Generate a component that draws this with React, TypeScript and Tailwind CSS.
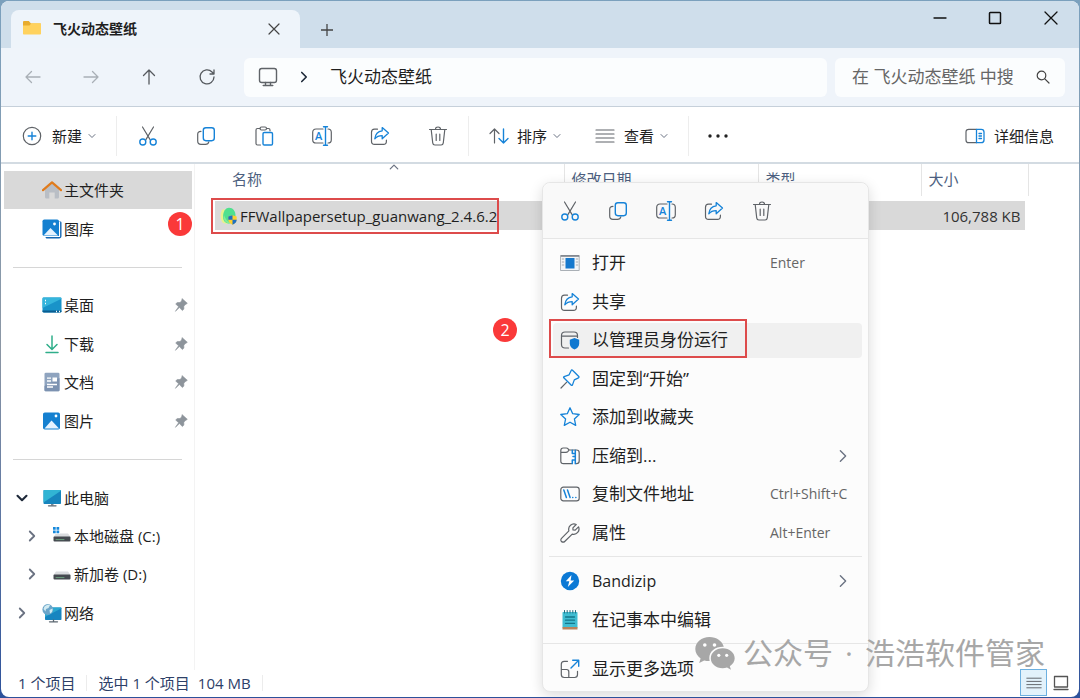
import React from "react";

type IconProps = { className?: string };

const GRAY = "#5f6368";
const BLUE = "#1683d8";

function Svg({ children, className = "size-5", box = "0 0 20 20" }: { children: React.ReactNode; className?: string; box?: string }) {
  return (
    <svg viewBox={box} className={`shrink-0 ${className}`} fill="none" strokeWidth="1.2" strokeLinecap="round" strokeLinejoin="round" aria-hidden="true">
      {children}
    </svg>
  );
}

/* ---------- command icons ---------- */

const CutIcon = ({ className }: IconProps) => (
  <Svg className={className}>
    <path d="M4.5 1l7.6 12.6M15.5 1L7.9 13.6" stroke={GRAY} />
    <circle cx="4.8" cy="16" r="3" stroke={BLUE} strokeWidth="1.4" />
    <circle cx="15.2" cy="16" r="3" stroke={BLUE} strokeWidth="1.4" />
  </Svg>
);

const CopyIcon = ({ className }: IconProps) => (
  <Svg className={className}>
    <path d="M5 5.3C3 5.3 1.7 6.400 1.700 8.300V15c0 2 1.300 3.300 3.300 3.300h4.500c1.900 0 3-1 3.300-2.400" stroke={GRAY} />
    <rect x="7.300" y="1.700" width="11" height="13" rx="2.600" stroke={BLUE} strokeWidth="1.400" />
  </Svg>
);

const PasteIcon = ({ className }: IconProps) => (
  <Svg className={className}>
    <path d="M6 2.500H3.500A1.500 1.500 0 002 4v13.500A1.500 1.500 0 003.500 19H6.500M12.500 2.500H14.500A1.500 1.500 0 0116 4v.8" stroke={GRAY} />
    <rect x="6" y="1" width="6.500" height="3" rx="1.500" stroke={GRAY} />
    <rect x="9" y="6.500" width="9.500" height="12.500" rx="1.300" stroke={BLUE} strokeWidth="1.400" />
  </Svg>
);

const RenameIcon = ({ className }: IconProps) => (
  <Svg className={className}>
    <path d="M11 3H4C2 3 .7 4.300.7 6.300v7.400c0 2 1.300 3.300 3.300 3.300h7M16 3c2.200 0 3.300 1.300 3.300 3.300v7.400c0 2-1.100 3.300-3.300 3.300" stroke={GRAY} />
    <text x="3" y="13.800" fontSize="11" fontWeight="600" fontFamily="Open Sans, sans-serif" fill={BLUE}>A</text>
    <path d="M13.500.8v18.400M11.500.8h4M11.500 19.200h4" stroke={BLUE} strokeWidth="1.400" />
  </Svg>
);

const ShareIcon = ({ className }: IconProps) => (
  <Svg className={className}>
    <path d="M7.500 3.200H4.500C2.500 3.200 1.500 4.300 1.500 6.200v9c0 2 1.100 3.200 3.100 3.200h8.800c2 0 3-1.200 3-3.200v-1" stroke={GRAY} />
    <path d="M12.200 1.600l6.300 5.500-6.300 5.600V9.600c-3.400 0-5.600.9-7.400 3.200.5-4.700 3-7.500 7.400-8z" stroke={BLUE} strokeWidth="1.300" />
  </Svg>
);

const TrashIcon = ({ className }: IconProps) => (
  <Svg className={className}>
    <path d="M1.500 3.500h17M3.200 3.500l1.500 13.300c.2 1.400.9 2.200 2.200 2.200h6.200c1.300 0 2-.8 2.200-2.200l1.500-13.300M7.500 3.200C7.500 1.800 8.500 1 10 1s2.500.8 2.500 2.200M8.200 8v6.500M11.800 8v6.500" stroke={GRAY} />
  </Svg>
);

const PlusCircleIcon = () => (
  <Svg>
    <circle cx="10" cy="10" r="8.700" stroke={GRAY} />
    <path d="M10 6.200v7.600M6.200 10h7.600" stroke={BLUE} strokeWidth="1.400" />
  </Svg>
);

const SortIcon = () => (
  <Svg>
    <path d="M5.500 17V3M1 7.500L5.500 3 10 7.500" stroke={GRAY} />
    <path d="M14.500 3v14M10 12.500l4.500 4.500 4.500-4.500" stroke={BLUE} strokeWidth="1.400" />
  </Svg>
);

const LinesIcon = ({ className }: IconProps) => (
  <Svg className={className}>
    <path d="M1 4h18M1 8h18M1 12h18M1 16h18" stroke={GRAY} />
  </Svg>
);

const DetailsIcon = () => (
  <Svg>
    <path d="M11.500 3.300H3.800C2 3.300 1 4.300 1 6.100v7.800c0 1.800 1 2.800 2.800 2.800h7.700" stroke={GRAY} />
    <path d="M11.500 3.300h4.700c1.800 0 2.800 1 2.800 2.800v7.800c0 1.800-1 2.800-2.800 2.800h-4.700zM14 7.500h2.500M14 10h2.500M14 12.500h2.500" stroke={BLUE} strokeWidth="1.300" />
  </Svg>
);

const Chevron = ({ dir = "down", className = "size-2 text-gray-500" }: { dir?: "down" | "right" | "up"; className?: string }) => (
  <svg viewBox="0 0 8 8" className={`shrink-0 ${className}`} fill="none" stroke="currentColor" strokeWidth="1" strokeLinecap="round" strokeLinejoin="round" aria-hidden="true">
    {dir === "down" && <path d="M1 2.500l3 3 3-3" />}
    {dir === "up" && <path d="M1 5.500l3-3 3 3" />}
    {dir === "right" && <path d="M2.500 1l3 3-3 3" />}
  </svg>
);

/* ---------- navigation icons ---------- */

const ArrowIcon = ({ d, className = "text-[#55595e]" }: { d: string; className?: string }) => (
  <Svg className={`size-5 ${className}`}>
    <path d={d} stroke="currentColor" strokeWidth="1.300" />
  </Svg>
);

const FolderIcon = () => (
  <Svg className="size-[18px]" box="0 0 18 18">
    <path d="M0 4.500V2.200C0 1.500.5 1 1.200 1h4.600L8 3.500h9c.6 0 1 .4 1 1V8H0z" fill="#e8ac2e" />
    <path d="M0 5.500h6.500L8.300 3.300H17c.6 0 1 .4 1 1v9.200c0 .6-.4 1-1 1H1c-.6 0-1-.4-1-1z" fill="#ffd25e" />
  </Svg>
);

const MonitorOutlineIcon = () => (
  <Svg>
    <rect x="1.500" y="1.500" width="17" height="14" rx="2.200" stroke={GRAY} strokeWidth="1.400" />
    <path d="M7.500 15.500v3M12.500 15.500v3M5.200 18.500h9.600" stroke={GRAY} strokeWidth="1.400" />
  </Svg>
);

/* ---------- sidebar icons ---------- */

const HomeIcon = () => (
  <Svg>
    <path d="M3 9.500L10 3.500l7 6V17c0 .8-.5 1.500-1.300 1.500h-3V12.500H7.300v6h-3C3.500 18.500 3 17.800 3 17z" fill="#b9bec5" />
    <path d="M1 10.200L10 2.300l9 7.900" stroke="#e07b1c" strokeWidth="2.200" />
  </Svg>
);

const PictureGlyph = ({ stacked }: { stacked?: boolean }) => (
  <Svg>
    {stacked && <path d="M17 2.500h1.200c.7 0 1.300.5 1.300 1.200V17c0 1.600-1 2.500-2.500 2.500H5c-1 0-1.500-.6-1.500-1.500z" fill="#1467b3" />}
    {stacked && <path d="M3 17.500h14.500V3" stroke="#fff" strokeWidth="1.200" />}
    <rect x={stacked ? 0.5 : 1} y={stacked ? 0.5 : 1.5} width={stacked ? 16.5 : 17} height={stacked ? 16.5 : 17} rx="1.800" fill="#1580d0" />
    <path d={stacked ? "M1.500 16.500l7-7.500 7.500 7.500z" : "M2.500 17.500l7-8 7.500 8z"} fill="#e6f3ff" />
    <circle cx={stacked ? 12.5 : 14} cy="5" r="1.400" fill="#fff" />
  </Svg>
);

const DesktopIcon = () => (
  <Svg>
    <rect x=".5" y="2.500" width="19" height="15" rx="1.300" fill="#1993c9" />
    <path d="M1.800 2.500h16.400c.8 0 1.300.5 1.300 1.300L.5 13V3.800c0-.8.500-1.300 1.300-1.300z" fill="#35b5dc" />
    <path d="M.5 15.500h19v.8c0 .7-.5 1.200-1.300 1.200H1.800c-.8 0-1.300-.5-1.300-1.200z" fill="#0a5d91" />
    <path d="M3 5.500h1M3 8.500h1M14 16.500h1M17 16.500h1" stroke="#fff" strokeLinecap="butt" strokeWidth="1.300" />
  </Svg>
);

const DownloadIcon = () => (
  <Svg>
    <path d="M10 2v13M5 10.500l5 5 5-5M4 18.500h12" stroke="#2fae8a" strokeWidth="1.500" />
  </Svg>
);

const DocumentIcon = () => (
  <Svg>
    <rect x="2.500" y=".8" width="15" height="18.500" rx="1.300" fill="#8fa4bf" />
    <path d="M2.500 14L17.500 6v12c0 .8-.5 1.300-1.300 1.300H3.800c-.8 0-1.300-.5-1.300-1.300z" fill="#7c92b1" />
    <path d="M5 6.200h4M5 9h4M5 12.500h10M5 15h6" stroke="#fff" strokeWidth="1.300" strokeLinecap="butt" />
    <rect x="10.500" y="5.500" width="4.500" height="4" fill="#fff" />
  </Svg>
);

const ComputerIcon = () => (
  <Svg>
    <rect x="1.500" y="2" width="17.500" height="14" rx=".8" fill="#1785bd" />
    <path d="M2.300 2h15.900c.5 0 .8.3.8.8L1.500 14.500V2.800c0-.5.3-.8.8-.8z" fill="#31b4d4" />
    <path d="M9 16h2.500v1.500H9z" fill="#7b8792" />
    <path d="M6.500 17.800h7.500" stroke="#5b6670" strokeWidth="1.300" />
  </Svg>
);

const DiskIcon = ({ system }: { system?: boolean }) => (
  <Svg>
    <path d="M4 7.500h12l2.500 3.500H1.500z" fill="#dadcdf" />
    <rect x="1.500" y="10.500" width="17" height="5" rx="1" fill="#454a50" />
    <path d="M4 13.600h8" stroke="#75b58a" strokeWidth=".8" />
    {system && (
      <>
        <path d="M0 .500h8v7.500H0z" fill="#fff" />
        <path d="M1 1h2.700v2.700H1zM4.500 1h2.700v2.700H4.500zM1 4.500h2.700v2.700H1zM4.500 4.500h2.700v2.700H4.500z" fill="#1689dc" />
      </>
    )}
  </Svg>
);

const NetworkIcon = () => (
  <Svg>
    <rect x="3" y="4.500" width="16.500" height="12.500" rx=".8" fill="#1785c0" />
    <path d="M19.500 5.300L3 14V5.300c0-.5.3-.8.8-.8h14.900c.5 0 .8.3.8.800z" fill="#2ba8d0" />
    <path d="M7.500 18.800h8M11.500 17v1.500" stroke="#5b6670" strokeWidth="1.300" />
    <circle cx="5.800" cy="6.500" r="5.400" fill="#6ba5c9" />
    <path d="M2.500 3.500c2-1.800 4.500-2 5.500-1.200L6.500 5 4 6l-.5 2.500L1.500 6zM7.500 7l3-1.500c.3 2.500-.5 4-2.500 5z" fill="#d2ebf2" />
  </Svg>
);

const PinnedIcon = () => (
  <Svg className="size-[14px]" box="0 0 14 14">
    <path d="M8.300.8l5 4.500-1.700 1.200-.600.200-1.200 1.700.100 2.700-1.500 1.400-3-2.900-4 3.700 3.200-4.600L1.700 6l1.500-1.400 2.800-.100 1.500-1.400z" fill="#8d949b" stroke="#8d949b" strokeWidth=".6" />
  </Svg>
);

const FileIcon = () => (
  <Svg className="size-[18px]" box="0 0 18 18">
    <path d="M3 2C0 5-.500 12 3 16l5 1V4z" fill="#e8f28e" />
    <path d="M9 .8c4 0 6.500 3.500 6.500 7.700S13 16.500 9 16.500 3 13.500 3 9.500 5 .8 9 .8z" fill="#4fe08f" />
    <path d="M4 8c-1.500 3 .5 7 4 8.500l3-1C7 14.500 5.500 12 4 8z" fill="#83eb9a" />
    <path d="M12.500 8.300l4.200 1.300v3c0 2.300-1.600 4-4.200 5.200-2.600-1.200-4.200-2.900-4.200-5.200v-3z" fill="#ffcf2e" />
    <path d="M12.500 8.300v4.500H8.300V9.600zM12.500 12.800h4.200c0 2.200-1.600 3.900-4.200 5z" fill="#1e6fc2" />
  </Svg>
);

/* ---------- menu icons ---------- */

const OpenIcon = () => (
  <Svg>
    <rect x=".8" y="2.500" width="18.400" height="15" fill="#f3f5f7" stroke="#aab0b6" strokeWidth="1" />
    <path d="M.8 3h18.400" stroke="#777d84" strokeWidth="1.500" strokeLinecap="butt" />
    <rect x="5.500" y="5" width="9" height="10.500" fill="#1679cd" />
    <path d="M2.200 6h1.600M2.200 9h1.600M2.200 12h1.600M16.200 6h1.600M16.200 9h1.600M16.200 12h1.600" stroke="#a5abb2" strokeWidth="1" />
  </Svg>
);

const AdminIcon = () => (
  <Svg>
    <path d="M8.500 18H5c-2.300 0-3.500-1.200-3.500-3.500v-9C1.500 3.200 2.700 2 5 2h9c2.300 0 3.500 1.200 3.500 3.500v2M1.500 6.200h16" stroke={GRAY} />
    <path d="M14.500 8l4.700 1.700v4c0 2.600-1.900 4.500-4.700 5.800-2.800-1.300-4.700-3.200-4.700-5.800v-4z" fill="#0f78d0" />
  </Svg>
);

const PinIcon = () => (
  <Svg>
    <path d="M1 19l5.500-5.700" stroke={GRAY} />
    <path d="M12.500 1.200l6.300 6.300c.400.5.300 1-.3 1.300l-4.200 2.100-1.800 5c-.2.600-.7.700-1.200.3L3.800 8.800c-.4-.5-.3-1 .3-1.200l5-1.800 2.100-4.300c.3-.6.900-.7 1.300-.3z" stroke={BLUE} strokeWidth="1.300" />
  </Svg>
);

const StarIcon = () => (
  <Svg>
    <path d="M10 .8l2.700 5.900 6.500.8-4.800 4.400 1.300 6.500L10 15.200l-5.700 3.200 1.300-6.500L.8 7.500l6.500-.8z" stroke={BLUE} strokeWidth="1.300" />
  </Svg>
);

const ZipIcon = () => (
  <Svg>
    <path d="M12 17.700H3.500c-1.700 0-2.700-1-2.700-2.700V4.500c0-1.500.9-2.500 2.400-2.500h3c1 0 1.500.3 2 1l.9 1h7.400c1.700 0 2.700 1 2.700 2.700V15c0 1.700-1 2.700-2.700 2.700M.8 6.400h5c1 0 1.600-.3 2.200-1L9.100 4" stroke={GRAY} />
    <path d="M12.300 4.200v3.300h3M15.300 4.200v13.500M13 10.500h2.300M12.300 17.500v-3.500h3" stroke={BLUE} strokeWidth="1.500" />
  </Svg>
);

const PathIcon = () => (
  <Svg>
    <rect x=".8" y="3.200" width="18.400" height="13.600" rx="2.600" stroke={GRAY} />
    <path d="M3.800 6l2.600 7.600M7.500 6l2.600 7.600M12.700 13.500h.1M15.800 13.500h.1" stroke={BLUE} strokeWidth="1.500" />
  </Svg>
);

const WrenchIcon = () => (
  <Svg>
    <path d="M16.200 1.500a5.300 5.300 0 00-7.300 6.300l-7.400 7.500a2.200 2.200 0 003.200 3.200l7.500-7.400a5.300 5.300 0 006.300-7.300l-3.300 3.300-2.200-.1-.1-2.200z" stroke={GRAY} />
  </Svg>
);

const BandizipIcon = () => (
  <Svg>
    <circle cx="10" cy="10" r="9.200" fill="#0b79d5" />
    <path d="M11.500 4L5.800 10.200h3.500L7.800 16l6.400-6.500h-3.600z" fill="#fff" />
  </Svg>
);

const NotepadIcon = () => (
  <Svg>
    <rect x="2.500" y="2" width="15" height="16" rx=".8" fill="#3fbdd2" />
    <path d="M2.500 17h15v2.500h-15z" fill="#b9825b" />
    <path d="M4.500.5v2.500M7.200.5v2.500M10 .5v2.500M12.800.5v2.500M15.500.5v2.500" stroke="#256d80" strokeWidth="1" />
    <path d="M5.500 7h9M5.500 10.200h9M5.500 13.400h9" stroke="#15768b" strokeWidth="1.300" />
  </Svg>
);

const MoreOptionsIcon = () => (
  <Svg>
    <path d="M7.500 2.300H4.200c-1.700 0-2.900 1.200-2.900 2.900v10.400c0 1.700 1.200 2.900 2.900 2.900h10.400c1.700 0 2.900-1.200 2.900-2.900v-3.300M1.300 10.500h5.300c1.500 0 2.200.8 2.200 2.200v5.800" stroke={GRAY} />
    <path d="M11 9l7.500-7.500M12.700 1.300h6v6" stroke={BLUE} strokeWidth="1.400" />
  </Svg>
);

const WeChatIcon = () => (
  <svg viewBox="0 0 40 34" className="h-[34px] w-10 shrink-0" aria-hidden="true">
    <path d="M14.500 1C6.500 1 .3 6.200.3 13c0 3.900 2.100 7.100 5.300 9.400L4.200 27l5-2.600c1.900.5 3.500.8 5.500.700A11.500 11.500 0 0114.300 22c0-6.600 6-11.500 14.500-11.200C27.300 5 21.500 1 14.500 1z" fill="#a7a7a7" />
    <path d="M27.700 12.300c-6.800 0-11.900 4.500-11.900 10s5.100 10 11.900 10c1.500 0 3-.3 4.300-.700l4 2.200-1.200-3.600c3-2 4.900-4.600 4.900-7.900 0-5.500-5.200-10-12-10z" fill="#a7a7a7" />
    <circle cx="9.800" cy="9" r="1.800" fill="#fff" />
    <circle cx="19.500" cy="9" r="1.800" fill="#fff" />
    <circle cx="23.800" cy="19.300" r="1.600" fill="#fff" />
    <circle cx="31.700" cy="19.300" r="1.600" fill="#fff" />
  </svg>
);

/* ---------- building blocks ---------- */

const commands = [
  { label: "剪切", Icon: CutIcon },
  { label: "复制", Icon: CopyIcon },
  { label: "粘贴", Icon: PasteIcon },
  { label: "重命名", Icon: RenameIcon },
  { label: "共享", Icon: ShareIcon },
  { label: "删除", Icon: TrashIcon },
];

function NavButton({ label, d, muted }: { label: string; d: string; muted?: boolean }) {
  return (
    <button aria-label={label} className="flex h-10 w-[58px] items-center justify-center">
      <ArrowIcon d={d} className={muted ? "text-[#a9afb6]" : "text-[#55595e]"} />
    </button>
  );
}

function PlaceLink({ icon, label, pinned, active }: { icon: React.ReactNode; label: string; pinned?: boolean; active?: boolean }) {
  return (
    <a href="#" className={`ml-[3px] mr-0.5 flex items-center gap-0.5 pl-[38px] pr-1 ${active ? "bg-[#d9d9d9]" : ""}`}>
      {icon}
      <span className="flex-1">{label}</span>
      {pinned && <PinnedIcon />}
    </a>
  );
}

function TreeLink({ icon, label, open, nested }: { icon: React.ReactNode; label: string; open?: boolean; nested?: boolean }) {
  return (
    <a href="#" className={`flex items-center ${nested ? "pl-[25px]" : "pl-[15px]"}`}>
      <Chevron dir={open ? "down" : "right"} className={open ? "size-3 stroke-[1.4] text-gray-800" : "size-3 stroke-[1.2] text-gray-500"} />
      <span className="w-3.5" />
      {icon}
      <span className="pl-0.5">{label}</span>
    </a>
  );
}

function Divider() {
  return <div className="mx-3 h-px self-center bg-[#d6d6d6]" />;
}

function MenuItem({ icon, label, hint, more, hot, latin }: { icon: React.ReactNode; label: string; hint?: string; more?: boolean; hot?: boolean; latin?: boolean }) {
  return (
    <button role="menuitem" className="relative flex items-center py-0.5 pl-1 text-left">
      <span className={`flex h-full w-full items-center rounded pl-[7px] pr-3 ${hot ? "bg-[#f0f0f0]" : ""}`}>
        {icon}
        <span className={`flex-1 pl-3 ${latin ? "text-base" : ""}`}>{label}</span>
        {hint && <span className="w-[80px] whitespace-nowrap text-sm text-[#666]">{hint}</span>}
        {more && <Chevron dir="right" className="size-3.5 stroke-[0.8] text-gray-500" />}
      </span>
      {hot && <span className="absolute -top-0.5 bottom-0.5 left-0 w-[198px] border-2 border-[#dd4b4b]" />}
    </button>
  );
}

function Step({ n, className }: { n: number; className: string }) {
  return (
    <span className={`absolute flex size-6 items-center justify-center rounded-full bg-[#fa3939] text-base text-white ${className}`}>{n}</span>
  );
}

/* ---------- page ---------- */

export default function App() {
  return (
    <div className="flex min-h-screen flex-col bg-gradient-to-b from-[#7ba0bd] via-[#8c97a5] to-[#2d519b] p-px font-['Open_Sans','Noto_Sans_CJK_SC',sans-serif] text-[15px] leading-5 text-[#1f1f1f]">
      <div className="relative flex flex-1 flex-col overflow-hidden rounded-lg bg-white">
        {/* tab strip */}
        <header className="flex h-[47px] items-stretch bg-[#cfdeeb]">
          <div className="ml-2.5 mt-[9px] flex w-[289px] items-center rounded-t-lg bg-[#eef4fa] pl-3 pr-3.5">
            <FolderIcon />
            <h1 className="flex-1 pl-3 text-sm font-bold">飞火动态壁纸</h1>
            <button aria-label="关闭标签页" className="flex size-6 items-center justify-center">
              <Svg className="size-3" box="0 0 12 12"><path d="M1 1l10 10M11 1L1 11" stroke="#444" /></Svg>
            </button>
          </div>
          <button aria-label="新建标签页" className="flex w-[54px] items-center justify-center pt-2.5">
            <Svg className="size-3" box="0 0 12 12"><path d="M6 0v12M0 6h12" stroke="#444" strokeWidth="1.300" /></Svg>
          </button>
          <div className="flex-1" />
          <button aria-label="最小化" className="flex h-[34px] w-[56px] items-center justify-center">
            <Svg className="size-3.5" box="0 0 14 14"><path d="M1 7h12" stroke="#111" strokeWidth="1.300" /></Svg>
          </button>
          <button aria-label="最大化" className="flex h-[34px] w-[54px] items-center justify-center">
            <Svg className="size-3.5" box="0 0 14 14"><rect x="1.500" y="1.500" width="11" height="11" rx=".8" stroke="#111" strokeWidth="1.500" /></Svg>
          </button>
          <button aria-label="关闭" className="flex h-[34px] w-[57px] items-center justify-center">
            <Svg className="size-3.5" box="0 0 14 14"><path d="M1 1l12 12M13 1L1 13" stroke="#111" strokeWidth="1.300" /></Svg>
          </button>
        </header>

        {/* navigation bar */}
        <nav className="flex h-[59px] items-center border-b border-[#c6d0da] bg-[#eff4fa] pl-[3px] pr-3.5">
          <NavButton label="后退" muted d="M17 10H3M8.500 4.500L3 10l5.500 5.500" />
          <NavButton label="前进" muted d="M3 10h14M11.500 4.500L17 10l-5.500 5.500" />
          <NavButton label="上移" d="M10 17V3M4.500 8.500L10 3l5.500 5.500" />
          <NavButton label="刷新" d="M17 10a7 7 0 11-2-5l2 2M17 3v4h-4" />
          <div className="ml-2 flex h-[39px] flex-1 items-center rounded-md bg-[#fbfdfe] pl-3.5 text-[17px]">
            <MonitorOutlineIcon />
            <Chevron dir="right" className="ml-5 size-3 stroke-[1.1] text-gray-800" />
            <button className="ml-5">飞火动态壁纸</button>
          </div>
          <label className="ml-2 flex h-[39px] w-[230px] items-center rounded-md bg-[#fbfdfe] pl-[17px] pr-[15px]">
            <input aria-label="搜索" placeholder="在 飞火动态壁纸 中搜" className="w-full min-w-0 flex-1 bg-transparent text-[17px] outline-none placeholder:text-[#666]" />
            <Svg className="ml-2 size-3.5" box="0 0 14 14"><circle cx="5.500" cy="5.500" r="4.300" stroke="#444" /><path d="M8.800 8.800l4.200 4.200" stroke="#444" /></Svg>
          </label>
        </nav>

        {/* command bar */}
        <div role="toolbar" className="flex h-[57px] items-center border-b-2 border-[#d3dbe2] bg-white pt-0.5">
          <button className="flex w-[115px] items-center pl-[21px]">
            <PlusCircleIcon />
            <span className="ml-2.5 mr-1.5">新建</span>
            <Chevron />
          </button>
          <span className="mr-0.5 h-10 w-px bg-[#ededed]" />
          {commands.map(({ label, Icon }) => (
            <button key={label} aria-label={label} className="flex h-10 w-[58px] items-center justify-center"><Icon className="size-5" /></button>
          ))}
          <span className="ml-px h-10 w-px bg-[#ededed]" />
          <button className="ml-5 flex items-center">
            <SortIcon />
            <span className="ml-2 mr-1.5">排序</span>
            <Chevron />
          </button>
          <button className="ml-[34px] flex items-center">
            <LinesIcon className="size-5" />
            <span className="ml-[9px] mr-1.5">查看</span>
            <Chevron />
          </button>
          <span className="ml-5 h-10 w-px bg-[#ededed]" />
          <button aria-label="更多" className="flex h-10 w-[57px] items-center justify-center">
            <Svg><circle cx="2" cy="10" r="1.700" fill="#222" /><circle cx="10" cy="10" r="1.700" fill="#222" /><circle cx="18" cy="10" r="1.700" fill="#222" /></Svg>
          </button>
          <button className="ml-auto mr-[25px] flex items-center gap-[9px]">
            <DetailsIcon />
            <span>详细信息</span>
          </button>
        </div>

        {/* content */}
        <div className="flex flex-1 items-stretch">
          <aside className="relative grid w-[194px] shrink-0 auto-rows-fr border-r border-[#f3f3f3] pb-[38px] pt-[7px]">
            <PlaceLink icon={<HomeIcon />} label="主文件夹" active />
            <PlaceLink icon={<PictureGlyph stacked />} label="图库" />
            <Divider />
            <PlaceLink icon={<DesktopIcon />} label="桌面" pinned />
            <PlaceLink icon={<DownloadIcon />} label="下载" pinned />
            <PlaceLink icon={<DocumentIcon />} label="文档" pinned />
            <PlaceLink icon={<PictureGlyph />} label="图片" pinned />
            <Divider />
            <TreeLink icon={<ComputerIcon />} label="此电脑" open />
            <TreeLink icon={<DiskIcon system />} label="本地磁盘 (C:)" nested />
            <TreeLink icon={<DiskIcon />} label="新加卷 (D:)" nested />
            <TreeLink icon={<NetworkIcon />} label="网络" />
            <Step n={1} className="right-0.5 top-12" />
          </aside>

          <main className="relative min-w-0 flex-1 pl-5">
            <table className="w-[814px] table-fixed border-collapse text-left">
              <thead>
                <tr className="h-8 text-[#4d5f80]">
                  <th className="relative w-[349px] border-r border-[#e5e5e5] pb-0.5 pl-[17px] font-normal">
                    名称
                    <Chevron dir="up" className="absolute left-[174px] top-[-2px] size-2.5 text-gray-500" />
                  </th>
                  <th className="w-[194px] border-r border-[#e5e5e5] pb-0.5 pl-[7px] font-normal">修改日期</th>
                  <th className="w-[163px] border-r border-[#e5e5e5] pb-0.5 pl-[7px] font-normal">类型</th>
                  <th className="border-r border-[#e5e5e5] pb-0.5 pl-[7px] font-normal">大小</th>
                </tr>
              </thead>
              <tbody>
                <tr>
                  <td className="relative pt-[5px]">
                    <div className="flex h-[29px] items-center gap-0.5 bg-[#d9d9d9] pl-[5px]">
                      <FileIcon />
                      <span className="whitespace-nowrap">FFWallpapersetup_guanwang_2.4.6.2</span>
                    </div>
                    <span className="absolute -bottom-1 -left-1 top-0.5 w-[288px] border-2 border-[#dd4b4b]" />
                  </td>
                  <td className="pt-[5px]"><div className="h-[29px] bg-[#d9d9d9]" /></td>
                  <td className="pt-[5px]"><div className="h-[29px] bg-[#d9d9d9]" /></td>
                  <td className="pt-[5px]"><div className="mr-1 flex h-[29px] items-center justify-end bg-[#d9d9d9] pr-1 text-[#333]">106,788 KB</div></td>
                </tr>
              </tbody>
            </table>
            <Step n={2} className="left-[298px] top-[154px]" />
          </main>
        </div>

        {/* status bar */}
        <footer className="flex h-[27px] items-center pb-0.5 pl-[17px] text-[#2d4068]">
          <span>1 个项目</span>
          <span className="mx-[11px] h-4 w-px bg-[#ececec]" />
          <span>选中 1 个项目</span>
          <span className="ml-2">104 MB</span>
          <span className="mx-[11px] h-4 w-px bg-[#ececec]" />
          <div className="ml-auto mr-[5px] flex items-center">
            <button aria-label="详细信息视图" className="flex size-[27px] items-center justify-center border border-[#6cb0e0] bg-[#e2f2fb]"><LinesIcon className="size-4" /></button>
            <button aria-label="大图标视图" className="flex size-[27px] items-center justify-center">
              <Svg className="size-4" box="0 0 16 16"><path d="M1.500 1.500h13v10.500h-13zM1 14.500h14" stroke="#555" strokeWidth="1.300" /></Svg>
            </button>
          </div>
        </footer>

        {/* context menu */}
        <div role="menu" className="absolute left-[541px] top-[181px] flex w-[327px] flex-col rounded-lg border border-[#e6e6e6] bg-[#fcfcfc] pb-[3px] text-[17px] leading-6 shadow-[0_4px_14px_rgba(0,0,0,0.14)]">
          <div className="flex h-14 items-center rounded-t-lg border-b border-[#e6e6e6] bg-[#f9f9f9] pl-[3px]">
            {commands.filter((c) => c.label !== "粘贴").map(({ label, Icon }) => (
              <button key={label} role="menuitem" aria-label={label} className="flex h-10 w-12 items-center justify-center"><Icon className="size-5" /></button>
            ))}
          </div>
          <div className="mx-[6px] mt-[5px] grid h-[308px] auto-rows-fr">
            <MenuItem icon={<OpenIcon />} label="打开" hint="Enter" />
            <MenuItem icon={<ShareIcon />} label="共享" />
            <MenuItem icon={<AdminIcon />} label="以管理员身份运行" hot />
            <MenuItem icon={<PinIcon />} label="固定到“开始”" />
            <MenuItem icon={<StarIcon />} label="添加到收藏夹" />
            <MenuItem icon={<ZipIcon />} label="压缩到..." more />
            <MenuItem icon={<PathIcon />} label="复制文件地址" hint="Ctrl+Shift+C" />
            <MenuItem icon={<WrenchIcon />} label="属性" hint="Alt+Enter" />
          </div>
          <div className="mx-1.5 mb-[5px] mt-1 h-px bg-[#e6e6e6]" />
          <div className="mx-[6px] grid h-[77px] auto-rows-fr">
            <MenuItem icon={<BandizipIcon />} label="Bandizip" more latin />
            <MenuItem icon={<NotepadIcon />} label="在记事本中编辑" />
          </div>
          <div className="mb-[5px] mt-1 h-px bg-[#e6e6e6]" />
          <div className="mx-[6px] grid h-[39px]">
            <MenuItem icon={<MoreOptionsIcon />} label="显示更多选项" />
          </div>
        </div>

        {/* watermark */}
        <div className="pointer-events-none absolute bottom-[26px] right-[34px] flex items-center gap-2 whitespace-nowrap text-[30px] leading-9 text-[#a7a7a7]">
          <WeChatIcon />
          <p className="flex gap-3">
            <span>公众号</span>
            <span>·</span>
            <span>浩浩软件管家</span>
          </p>
        </div>
      </div>
    </div>
  );
}
